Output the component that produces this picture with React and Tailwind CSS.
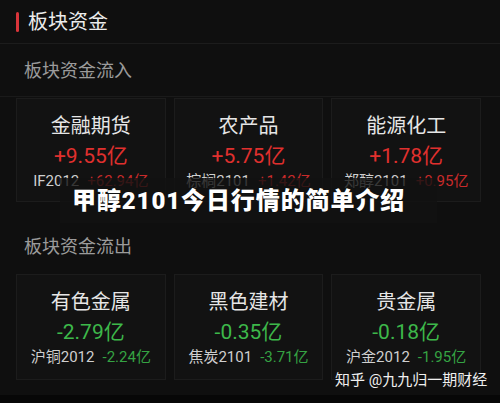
import React from 'react';

const inflow = [
  { name: '金融期货', value: '+9.55亿', code: 'IF2012', sub: '+62.94亿' },
  { name: '农产品', value: '+5.75亿', code: '棕榈2101', sub: '+1.42亿' },
  { name: '能源化工', value: '+1.78亿', code: '郑醇2101', sub: '+0.95亿' },
];

const outflow = [
  { name: '有色金属', value: '-2.79亿', code: '沪铜2012', sub: '-2.24亿' },
  { name: '黑色建材', value: '-0.35亿', code: '焦炭2101', sub: '-3.71亿' },
  { name: '贵金属', value: '-0.18亿', code: '沪金2012', sub: '-1.95亿' },
];

const font = { fontFamily: 'Roboto, "Noto Sans CJK SC", sans-serif' };

function Card({ item, up }) {
  return (
    <div className="flex h-full flex-col items-center border border-[#1c1c1c] bg-[#121212] pt-[12px]">
      <div className="text-[20px] leading-[30px] text-[#e6e6e6]">{item.name}</div>
      <div className={`text-[21px] leading-[30px] ${up ? 'text-[#e0302e]' : 'text-[#3db84a]'}`}>{item.value}</div>
      <div className="mt-[-2px] flex items-center gap-[8px] text-[15px] leading-[24px]">
        <span className="text-[#cfcfcf]">{item.code}</span>
        <span className={up ? 'text-[#c92b2b]' : 'text-[#35a343]'}>{item.sub}</span>
      </div>
    </div>
  );
}

export default function App() {
  return (
    <div className="relative h-[403px] w-[500px] overflow-hidden bg-[#0f0f0f]" style={font}>
      <div className="flex h-[44px] items-center border-b border-[#1c1c1c] pl-[16px]">
        <div className="h-[20px] w-[3px] rounded-sm bg-[#d9343a]" />
        <div className="ml-[9px] text-[20px] leading-none text-[#ececec]">板块资金</div>
      </div>

      <div className="flex h-[53px] items-center border-b border-[#1a1a1a] pl-[24px] text-[18px] text-[#9b9b9b]">
        板块资金流入
      </div>

      <div className="grid h-[105px] grid-cols-3 gap-[8px] pl-[16px] pr-[19px] pt-[1px]">
        {inflow.map((it) => (
          <Card key={it.name} item={it} up />
        ))}
      </div>

      <div className="flex h-[72px] items-center pl-[24px] pt-[16px] text-[18px] text-[#9b9b9b]">
        板块资金流出
      </div>

      <div className="grid h-[106px] grid-cols-3 gap-[8px] pl-[16px] pr-[19px]">
        {outflow.map((it) => (
          <Card key={it.name} item={it} />
        ))}
      </div>

      <div className="absolute bottom-0 left-0 h-[8px] w-full bg-[#070707]" />

      <div className="absolute left-[60px] top-[178px] flex h-[45px] w-[377px] items-center bg-[#111111]/80 pl-[12px]">
        <span className="text-[24px] font-black leading-none tracking-[0.9px] text-white">甲醇2101今日行情的简单介绍</span>
      </div>

      <div className="absolute left-[335px] top-[370px] text-[15px] leading-[20px] text-[#f0f0f0]">
        知乎 @九九归一期财经
      </div>
    </div>
  );
}
